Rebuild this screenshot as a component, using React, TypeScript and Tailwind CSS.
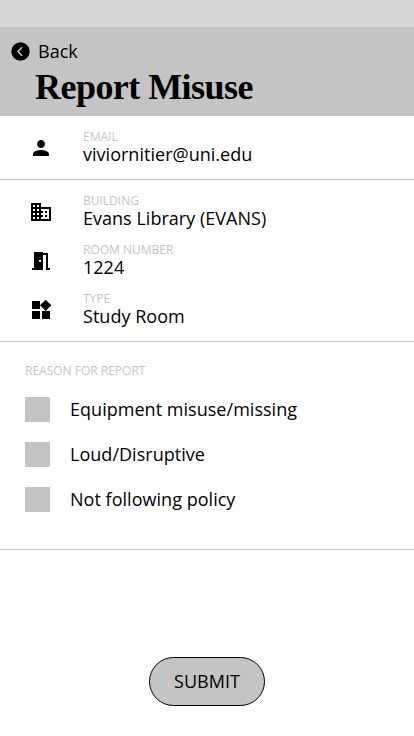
import { MdPerson, MdDomain, MdMeetingRoom, MdWidgets } from "react-icons/md";
import type { ReactNode } from "react";

function Field({ icon, label, value }: { icon: ReactNode; label: string; value: string }) {
  return (
    <div className="flex h-[49px]">
      <div className="w-[83px] pl-[29px] pt-[7px] text-[24px]">{icon}</div>
      <div>
        <div className="text-[12px] leading-[15px] text-[#c4c4c4]">{label}</div>
        <div className="text-[18px] leading-[20px] tracking-[0.02px]">{value}</div>
      </div>
    </div>
  );
}

export default function App() {
  return (
    <div className="flex h-[736px] w-[414px] flex-col overflow-hidden bg-white font-['Open_Sans',sans-serif] text-black">
      <div className="h-[27px] shrink-0 bg-[#d6d6d6]" />
      <header className="h-[89px] shrink-0 bg-[#c4c4c4] pt-[12px]">
        <button className="flex h-[25px] items-center pl-[11px] text-[18px] leading-[25px]">
          <svg viewBox="0 0 19 19" className="mr-2 h-[19px] w-[19px]">
            <circle cx="9.5" cy="9.5" r="9.2" />
            <path d="M11 5.3L7 9.5L11 13.7" fill="none" stroke="#c4c4c4" strokeWidth="1.6" />
          </svg>
          Back
        </button>
        <h1 className="pl-[35px] pt-[3px] font-['Liberation_Serif',serif] text-[36px] font-bold leading-[40px] tracking-[-0.54px]">Report Misuse</h1>
      </header>
      <section className="h-[64px] shrink-0 border-b border-[#c4c4c4] pt-[13px]">
        <Field icon={<MdPerson />} label="EMAIL" value="viviornitier@uni.edu" />
      </section>
      <section className="h-[162px] shrink-0 border-b border-[#c4c4c4] pt-[13px]">
        <Field icon={<MdDomain />} label="BUILDING" value="Evans Library (EVANS)" />
        <Field icon={<MdMeetingRoom />} label="ROOM NUMBER" value="1224" />
        <Field icon={<MdWidgets />} label="TYPE" value="Study Room" />
      </section>
      <section className="h-[208px] shrink-0 border-b border-[#c4c4c4] pl-[25px] pt-[20px]">
        <div className="mb-[18px] text-[12px] leading-[17px] text-[#c4c4c4]">REASON FOR REPORT</div>
        {["Equipment misuse/missing", "Loud/Disruptive", "Not following policy"].map((t) => (
          <label key={t} className="mb-[20px] flex h-[25px] items-center gap-[20px] text-[18px] leading-[25px] tracking-[0.03px]">
            <span className="h-[25px] w-[25px] bg-[#c4c4c4]" />
            {t}
          </label>
        ))}
      </section>
      <div className="flex justify-center pt-[107px]">
        <button className="h-[49px] w-[116px] rounded-full border border-black bg-[#c4c4c4] text-[18px]">SUBMIT</button>
      </div>
    </div>
  );
}
